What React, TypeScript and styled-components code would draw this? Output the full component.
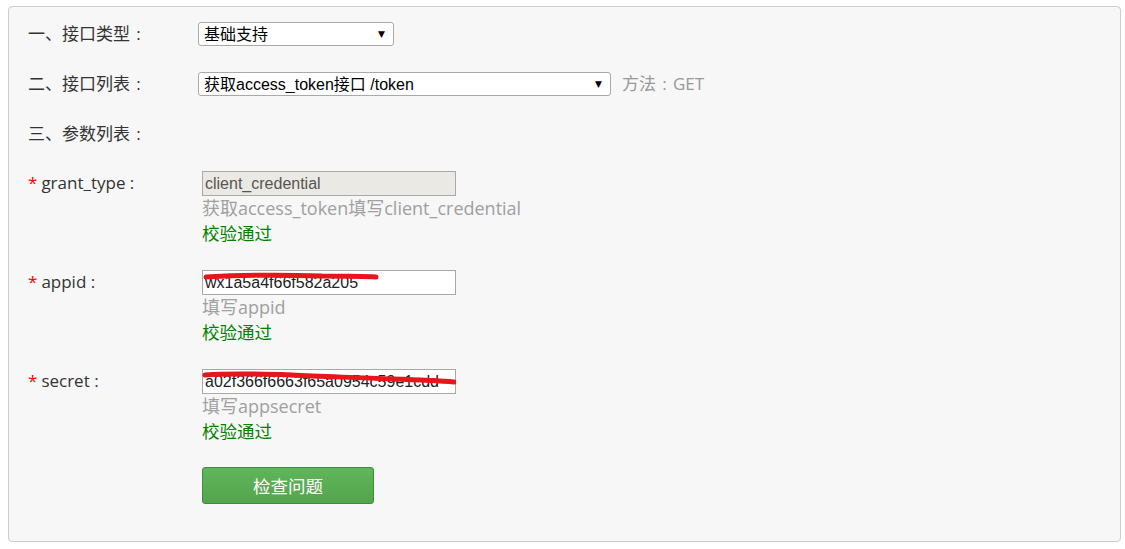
import React from "react";
import styled, { createGlobalStyle } from "styled-components";

const Global = createGlobalStyle`
  html, body { margin: 0; padding: 0; background: #fff; }
  body { font-family: "Open Sans", "Noto Sans CJK SC", sans-serif; }
  * { box-sizing: border-box; }
`;

const Panel = styled.div`
  margin: 6px 0 0 8px;
  width: 1113px;
  height: 536px;
  background: #f7f7f7;
  border: 1px solid #cccccc;
  border-radius: 4px;
  padding: 15px 0 0 19px;
  display: flex;
  flex-direction: column;
  color: #333;
  font-size: 16px;
`;

const Row = styled.div<{ $mb?: number }>`
  display: flex;
  align-items: center;
  height: 24px;
  margin-bottom: ${(p) => p.$mb ?? 26}px;
`;

const Label = styled.div<{ $w?: number }>`
  width: ${(p) => p.$w ?? 170}px;
  flex: none;
  font-family: "Open Sans", "Noto Sans CJK SC", sans-serif;
  font-size: 17px;
  line-height: 24px;
  color: #333;
  white-space: nowrap;
`;

const Colon = styled.span`
  display: inline-block;
  width: 1em;
  text-align: center;
`;

const Star = styled.span`
  color: #f00;
  margin-right: 4px;
`;

const SelectWrap = styled.div<{ $w: number }>`
  position: relative;
  width: ${(p) => p.$w}px;
  height: 24px;
`;

const Select = styled.select`
  appearance: none;
  -webkit-appearance: none;
  width: 100%;
  height: 100%;
  background: #fff;
  border: 1px solid #a9a9a9;
  border-radius: 3px;
  padding: 0 20px 0 5px;
  font-family: "Liberation Sans", "Noto Sans CJK SC", sans-serif;
  font-size: 16px;
  color: #000;
  outline: none;
`;

const Arrow = styled.span`
  position: absolute;
  right: 9px;
  top: 6px;
  font-size: 9px;
  line-height: 12px;
  color: #000;
  pointer-events: none;
  font-family: "DejaVu Sans", sans-serif;
`;

const Method = styled.span`
  margin-left: 11px;
  color: #999;
  font-size: 17px;
  line-height: 24px;
`;

const ParamRow = styled.div`
  display: flex;
  align-items: flex-start;
  margin-bottom: 24px;
`;

const Field = styled.div`
  display: flex;
  flex-direction: column;
`;

const InputWrap = styled.div`
  position: relative;
  width: 254px;
  height: 25px;
`;

const Input = styled.input<{ $disabled?: boolean }>`
  width: 100%;
  height: 100%;
  border: 1px solid #a9a9a9;
  background: ${(p) => (p.$disabled ? "#ebe9e3" : "#fff")};
  padding: 0 2px;
  font-family: "Liberation Sans", sans-serif;
  font-size: 16px;
  color: ${(p) => (p.$disabled ? "#555" : "#222")};
  outline: none;
`;

const Scribble = styled.svg`
  position: absolute;
  left: 0;
  top: 0;
  pointer-events: none;
`;

const Hint = styled.div`
  font-size: 18px;
  line-height: 25px;
  color: #a0a0a0;
  white-space: nowrap;
`;

const Passed = styled.div`
  font-size: 17.5px;
  line-height: 25px;
  color: #008000;
`;

const ButtonRow = styled.div`
  padding-left: 174px;
  margin-top: -1px;
`;

const Button = styled.button`
  width: 172px;
  height: 37px;
  border: 1px solid #3d8b3d;
  border-radius: 3px;
  background: linear-gradient(#5fb65b, #54a44c);
  color: #fff;
  font-family: "Noto Sans CJK SC", sans-serif;
  font-size: 17.5px;
  cursor: pointer;
`;

type P = {
  name: string;
  value: string;
  hint: string;
  disabled?: boolean;
  scribble?: React.ReactNode;
};

const params: P[] = [
  {
    name: "grant_type :",
    value: "client_credential",
    hint: "获取access_token填写client_credential",
    disabled: true,
  },
  {
    name: "appid :",
    value: "wx1a5a4f66f582a205",
    hint: "填写appid",
    scribble: (
      <path
        d="M4 7 C40 5 90 5 120 6 C140 6 160 6 174 7"
        stroke="#e8151c"
        strokeWidth="5"
        strokeLinecap="round"
        fill="none"
      />
    ),
  },
  {
    name: "secret :",
    value: "a02f366f6663f65a0954c59e1cdd",
    hint: "填写appsecret",
    scribble: (
      <path
        d="M3 6 C30 4 60 5 90 6 C120 8 150 8 190 10 C220 11 240 12 252 13"
        stroke="#e8151c"
        strokeWidth="5"
        strokeLinecap="round"
        fill="none"
      />
    ),
  },
];

export default function App() {
  return (
    <>
      <Global />
      <Panel>
        <Row>
          <Label>
            一、接口类型<Colon>:</Colon>
          </Label>
          <SelectWrap $w={196}>
            <Select defaultValue="a">
              <option value="a">基础支持</option>
            </Select>
            <Arrow>▼</Arrow>
          </SelectWrap>
        </Row>
        <Row>
          <Label>
            二、接口列表<Colon>:</Colon>
          </Label>
          <SelectWrap $w={413}>
            <Select defaultValue="a">
              <option value="a">获取access_token接口 /token</option>
            </Select>
            <Arrow>▼</Arrow>
          </SelectWrap>
          <Method>
            方法<Colon>:</Colon>GET
          </Method>
        </Row>
        <Row $mb={25}>
          <Label>
            三、参数列表<Colon>:</Colon>
          </Label>
        </Row>
        {params.map((p) => (
          <ParamRow key={p.name}>
            <Label $w={174}>
              <Star>*</Star>
              {p.name}
            </Label>
            <Field>
              <InputWrap>
                <Input
                  $disabled={p.disabled}
                  disabled={p.disabled}
                  defaultValue={p.value}
                />
                {p.scribble && (
                  <Scribble width="254" height="25" viewBox="0 0 254 25">
                    {p.scribble}
                  </Scribble>
                )}
              </InputWrap>
              <Hint>{p.hint}</Hint>
              <Passed>校验通过</Passed>
            </Field>
          </ParamRow>
        ))}
        <ButtonRow>
          <Button>检查问题</Button>
        </ButtonRow>
      </Panel>
    </>
  );
}
